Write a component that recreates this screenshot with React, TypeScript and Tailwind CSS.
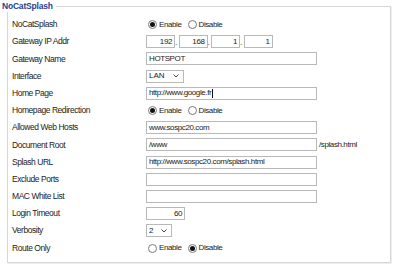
import { ReactNode } from "react";

const font = { fontFamily: '"Liberation Sans", Arial, sans-serif' };

function Row({ label, children }: { label: string; children: ReactNode }) {
  return (
    <div className="flex h-[17.2px] items-center">
      <div className="w-[134px] shrink-0 text-[8.5px] tracking-[-0.45px] text-[#222]">{label}</div>
      <div className="flex items-center">{children}</div>
    </div>
  );
}

function Radio({ checked, label }: { checked?: boolean; label: string }) {
  return (
    <label className="mr-[6px] flex items-center">
      <span className="flex h-[9px] w-[9px] items-center justify-center rounded-full border border-[#7a7a7a] bg-white">
        {checked && <span className="h-[5px] w-[5px] rounded-full bg-[#111]" />}
      </span>
      <span className="ml-[2px] text-[8px] tracking-[-0.4px] text-[#222]">{label}</span>
    </label>
  );
}

function RadioPair({ on }: { on: boolean }) {
  return (
    <div className="ml-[2px] flex items-center">
      <Radio checked={on} label="Enable" />
      <Radio checked={!on} label="Disable" />
    </div>
  );
}

function TextBox({ value = "", w = "w-[171px]", right, caret }: { value?: string; w?: string; right?: boolean; caret?: boolean }) {
  return (
    <div
      className={`flex h-[13px] items-center border border-[#b9b9b9] bg-white px-[2px] text-[8px] tracking-[-0.4px] text-[#222] ${w} ${
        right ? "justify-end" : ""
      }`}
    >
      <span>{value}</span>
      {caret && <span className="ml-[0.5px] h-[9px] w-px bg-[#111]" />}
    </div>
  );
}

function Select({ value, w }: { value: string; w: string }) {
  return (
    <div className={`flex h-[13px] items-center justify-between border border-[#b9b9b9] bg-white pl-[2px] pr-[4px] text-[8px] text-[#222] ${w}`}>
      <span>{value}</span>
      <svg width="6" height="4" viewBox="0 0 6 4" fill="none" stroke="#444" strokeWidth="1">
        <path d="M0.5 0.5 L3 3 L5.5 0.5" />
      </svg>
    </div>
  );
}

function IpAddr() {
  const parts = ["192", "168", "1", "1"];
  return (
    <div className="flex items-center">
      {parts.map((p, i) => (
        <div key={i} className="flex items-end">
          <TextBox value={p} w="w-[29px]" right />
          {i < 3 && <span className="w-[3.5px] text-[8px] leading-[10px] text-[#222]">.</span>}
        </div>
      ))}
    </div>
  );
}

export default function App() {
  return (
    <div className="h-[269px] w-[400px] bg-white" style={font}>
      <div className="relative pt-[6px] pl-[7px]">
        <div className="absolute left-[2px] top-0 bg-white pr-[3px] text-[8.5px] font-bold leading-[12px] tracking-[-0.2px] text-[#23448e]">
          NoCatSplash
        </div>
        <div className="h-[257px] w-[384px] border border-[#d6d6d6] pt-[9px] pl-[4px] shadow-[1px_1px_0_#eeeeee]">
          <Row label="NoCatSplash">
            <RadioPair on />
          </Row>
          <Row label="Gateway IP Addr">
            <IpAddr />
          </Row>
          <Row label="Gateway Name">
            <TextBox value="HOTSPOT" />
          </Row>
          <Row label="Interface">
            <Select value="LAN" w="w-[38px]" />
          </Row>
          <Row label="Home Page">
            <TextBox value="http://www.google.fr" caret />
          </Row>
          <Row label="Homepage Redirection">
            <RadioPair on />
          </Row>
          <Row label="Allowed Web Hosts">
            <TextBox value="www.sospc20.com" />
          </Row>
          <Row label="Document Root">
            <TextBox value="/www" />
            <span className="ml-[2px] text-[8px] tracking-[-0.4px] text-[#222]">/splash.html</span>
          </Row>
          <Row label="Splash URL">
            <TextBox value="http://www.sospc20.com/splash.html" />
          </Row>
          <Row label="Exclude Ports">
            <TextBox />
          </Row>
          <Row label="MAC White List">
            <TextBox />
          </Row>
          <Row label="Login Timeout">
            <TextBox value="60" w="w-[39px]" right />
          </Row>
          <Row label="Verbosity">
            <Select value="2" w="w-[26px]" />
          </Row>
          <Row label="Route Only">
            <RadioPair on={false} />
          </Row>
        </div>
      </div>
    </div>
  );
}
